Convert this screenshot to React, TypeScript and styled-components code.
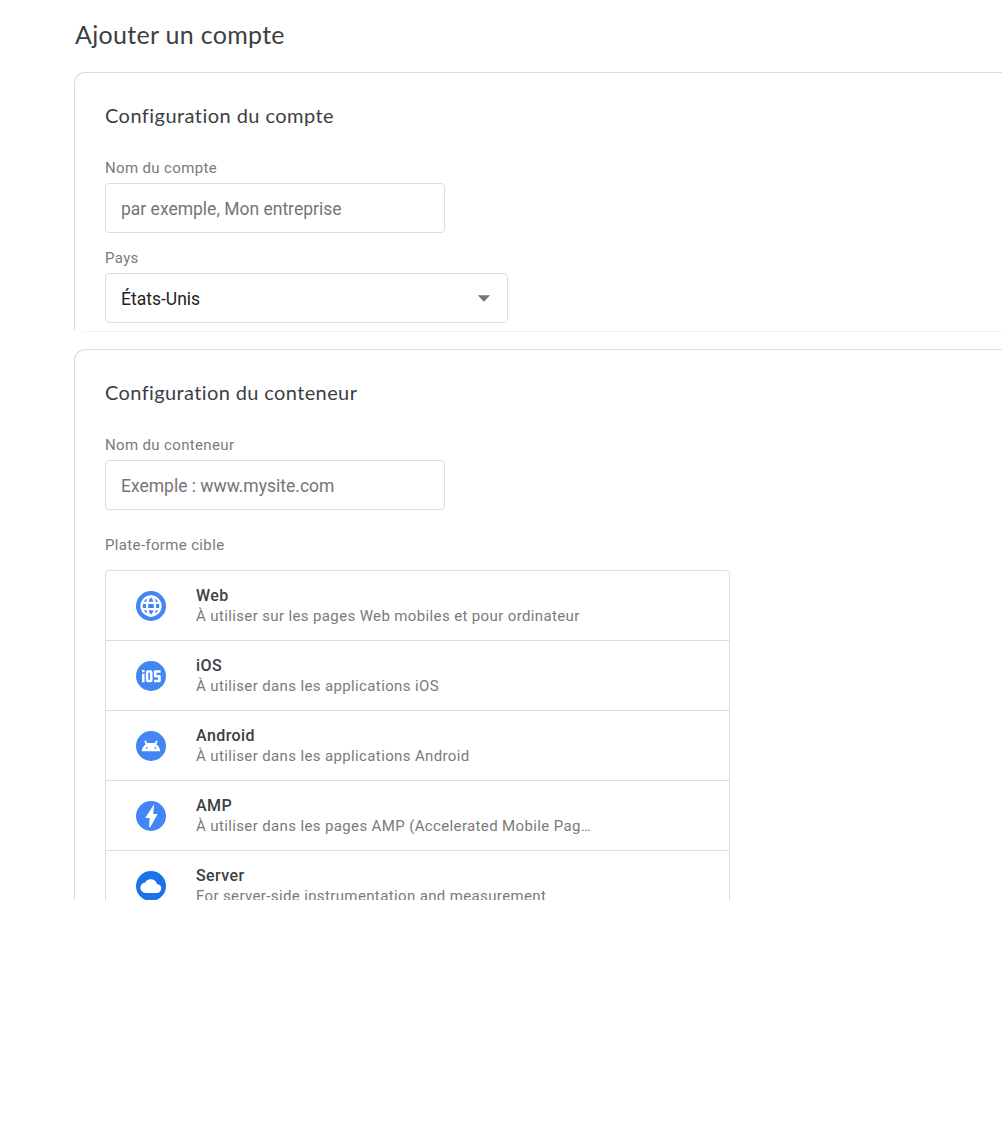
import React from "react";
import styled, { createGlobalStyle } from "styled-components";

const GlobalStyle = createGlobalStyle`
  *, *::before, *::after { box-sizing: border-box; }
  html, body { margin: 0; background: #fff; overflow: hidden; }
  body { font-family: Roboto, "Liberation Sans", sans-serif; color: #3c4043; }
`;

const Page = styled.main`
  height: 900px;
  padding-left: 74px;
  overflow: hidden;
`;

const PageTitle = styled.h1`
  margin: 0;
  padding: 18px 0 0 1px;
  height: 72px;
  font: 400 25px/32px Lato, sans-serif;
  letter-spacing: 0.3px;
  color: #3c4043;
  white-space: nowrap;
`;

const Card = styled.section<{ $height: number }>`
  height: ${(p) => p.$height}px;
  padding: 26px 0 0 30px;
  overflow: hidden;
  border: 1px solid #dadce0;
  border-width: 1px 0 0 1px;
  border-top-left-radius: 11px;
`;

const Divider = styled.div`
  height: 1px;
  margin: 1px 0 17px 9px;
  background: #f3f3f4;
`;

const CardTitle = styled.h2<{ $spacing: number }>`
  margin: 0 0 29px;
  font: 400 20px/32px Lato, sans-serif;
  letter-spacing: ${(p) => p.$spacing}px;
  color: #3c4043;
  white-space: nowrap;
`;

const Field = styled.div<{ $gap: number }>`
  display: flex;
  flex-direction: column;
  margin-bottom: ${(p) => p.$gap}px;
`;

const Label = styled.label`
  height: 23px;
  font-size: 15px;
  line-height: 16px;
  letter-spacing: 0.35px;
  color: #7a7a7a;
`;

const TextInput = styled.input`
  width: 340px;
  height: 50px;
  padding: 1px 15px 0;
  border: 1px solid #dadce0;
  border-radius: 4px;
  outline: none;
  background: #fff;
  font: 400 17.5px/24px Roboto, sans-serif;
  &::placeholder { color: #757575; opacity: 1; }
`;

const SelectBox = styled.button`
  display: flex;
  align-items: center;
  justify-content: space-between;
  width: 403px;
  height: 50px;
  padding: 1px 17px 0 15px;
  border: 1px solid #dadce0;
  border-radius: 4px;
  background: #fff;
  font: 400 17.5px/24px Roboto, sans-serif;
  color: #212121;
`;

const Arrow = styled.svg`
  width: 13px;
  height: 7px;
`;

const PlatformList = styled.ul`
  width: 625px;
  margin: 10px 0 0;
  padding: 0;
  list-style: none;
  border: 1px solid #dadce0;
  border-radius: 4px;
`;

const PlatformRow = styled.li`
  display: flex;
  align-items: center;
  gap: 30px;
  height: 70px;
  padding: 1px 0 0 30px;
  border-bottom: 1px solid #dadce0;
`;

const PlatformIcon = styled.svg`
  flex: none;
  width: 30px;
  height: 30px;
`;

const PlatformText = styled.div`
  width: 400px;
`;

const PlatformName = styled.div`
  font-size: 16px;
  font-weight: 500;
  line-height: 20px;
  letter-spacing: 0.43px;
  color: #3c4043;
`;

const PlatformNote = styled.div`
  font-size: 15px;
  line-height: 20px;
  letter-spacing: 0.37px;
  color: #7a7a7a;
  white-space: nowrap;
  overflow: hidden;
  text-overflow: ellipsis;
`;

const GlobeMark = () => (
  <g fill="none" stroke="#fff" strokeWidth="2.3">
    <circle cx="15" cy="15" r="9.5" />
    <ellipse cx="15" cy="15" rx="4" ry="9.5" />
    <path d="M6.1 11.9h17.8M6.1 18.1h17.8" />
  </g>
);

const IosMark = () => (
  <g fill="none" stroke="#fff" strokeWidth="2.5" strokeLinejoin="round">
    <path d="M7.3 12.7v8.5M7.3 9.1v2.1" />
    <rect x="11.1" y="10.5" width="4.2" height="9.5" rx="0.8" />
    <path d="M24.6 10.5h-5.4v4.7h4.3V20h-5.4" />
  </g>
);

const AndroidMark = () => (
  <>
    <path
      fill="#fff"
      d="M5.7 20.2c.3-3 1.7-5.3 3.9-6.8L8.3 10l1.4-.6 1.6 2.7h7.4l1.6-2.7 1.4.6-1.3 3.4c2.2 1.5 3.6 3.8 3.9 6.8z"
    />
    <circle cx="10.7" cy="16.9" r="0.9" fill="#4285f4" />
    <circle cx="19.3" cy="16.9" r="0.9" fill="#4285f4" />
  </>
);

const BoltMark = () => (
  <path fill="#fff" d="M17.8 3.8 9.2 17h4.4l-.5 9.2h1.2L21.6 13h-4.4l1-9.2z" />
);

const CloudMark = () => (
  <path
    fill="#fff"
    d="M20.9 12.9a6.3 6.3 0 0 0-11.6-1.4A5.1 5.1 0 0 0 9.8 21.9h10.8a4.5 4.5 0 0 0 .3-9z"
  />
);

const platforms = [
  { name: "Web", note: "À utiliser sur les pages Web mobiles et pour ordinateur", color: "#4285f4", Mark: GlobeMark },
  { name: "iOS", note: "À utiliser dans les applications iOS", color: "#4285f4", Mark: IosMark },
  { name: "Android", note: "À utiliser dans les applications Android", color: "#4285f4", Mark: AndroidMark },
  { name: "AMP", note: "À utiliser dans les pages AMP (Accelerated Mobile Pag…", color: "#4285f4", Mark: BoltMark },
  { name: "Server", note: "For server-side instrumentation and measurement", color: "#1a73e8", Mark: CloudMark },
];

export default function App() {
  return (
    <>
      <GlobalStyle />
      <Page>
        <PageTitle>Ajouter un compte</PageTitle>
        <Card $height={258}>
          <CardTitle $spacing={0.45}>Configuration du compte</CardTitle>
          <Field $gap={17}>
            <Label htmlFor="account">Nom du compte</Label>
            <TextInput id="account" placeholder="par exemple, Mon entreprise" />
          </Field>
          <Field $gap={0}>
            <Label>Pays</Label>
            <SelectBox type="button">
              États-Unis
              <Arrow viewBox="0 0 13 7">
                <path d="M.7.2H13L6.9 6.8z" fill="#757575" />
              </Arrow>
            </SelectBox>
          </Field>
        </Card>
        <Divider />
        <Card $height={580}>
          <CardTitle $spacing={0.38}>Configuration du conteneur</CardTitle>
          <Field $gap={27}>
            <Label htmlFor="container">Nom du conteneur</Label>
            <TextInput id="container" placeholder="Exemple : www.mysite.com" />
          </Field>
          <Field $gap={0}>
            <Label as="span">Plate-forme cible</Label>
            <PlatformList>
              {platforms.map(({ name, note, color, Mark }) => (
                <PlatformRow key={name}>
                  <PlatformIcon viewBox="0 0 30 30">
                    <circle cx="15" cy="15" r="15" fill={color} />
                    <Mark />
                  </PlatformIcon>
                  <PlatformText>
                    <PlatformName>{name}</PlatformName>
                    <PlatformNote>{note}</PlatformNote>
                  </PlatformText>
                </PlatformRow>
              ))}
            </PlatformList>
          </Field>
        </Card>
      </Page>
    </>
  );
}
